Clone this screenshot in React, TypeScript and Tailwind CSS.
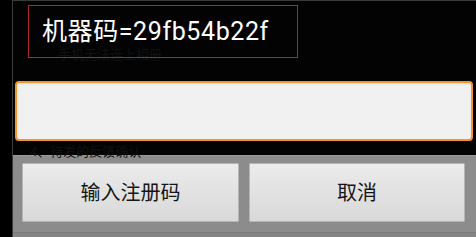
import React from "react";

export default function App() {
  const font = { fontFamily: 'Roboto, "Noto Sans CJK SC", sans-serif' };
  return (
    <div className="w-[476px] h-[237px] bg-black flex overflow-hidden" style={font}>
      <div className="w-[12px] h-full bg-black" />
      <div className="w-[1px] h-full bg-[#3c3c3c]" />
      <div className="flex-1 flex flex-col">
        <div className="h-[1px] bg-[#3a3a3a]" />
        <div className="h-[154px] bg-[#030303] flex flex-col relative">
          <div className="absolute left-[45px] top-[47px] text-[13px] text-[#111111] leading-none">手机无法连上相册</div>
          <div className="absolute left-[17px] top-[144px] text-[13px] text-[#101010] leading-none">4、待发的反馈确认</div>
          <div className="relative ml-[15px] mt-[4px] w-[270px] h-[53px] border border-[#b0262a] flex items-center pl-[13px]">
            <span className="text-white text-[25px] leading-none tracking-[0.6px]">机器码=29fb54b22f</span>
          </div>
          <div className="relative ml-[2px] mt-[23px] w-[458px] h-[60px] rounded-[4px] border-[2px] border-[#f3952c] bg-[#f1f1f1] shadow-[inset_0_1px_2px_rgba(0,0,0,0.08)]" />
        </div>
        <div className="flex-1 bg-[#8c8c8c] border-t border-[#9a9a9a] flex flex-col">
          <div className="flex gap-[10px] pl-[9px] pt-[7px]">
            <button className="w-[217px] h-[59px] bg-gradient-to-b from-[#ebebeb] to-[#d9d9d9] border border-[#b5b5b5] rounded-[1px] text-[20px] text-[#151515] flex items-center justify-center">
              输入注册码
            </button>
            <button className="w-[216px] h-[59px] bg-gradient-to-b from-[#ebebeb] to-[#d9d9d9] border border-[#b5b5b5] rounded-[1px] text-[20px] text-[#151515] flex items-center justify-center">
              取消
            </button>
          </div>
          <div className="mt-auto h-[5px] border-t border-[#7a7a7a] bg-[#858585]" />
        </div>
      </div>
    </div>
  );
}
